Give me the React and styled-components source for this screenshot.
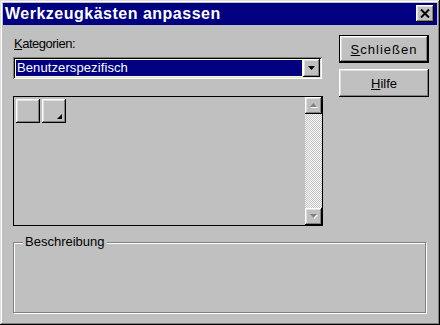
import styled, { createGlobalStyle, css } from "styled-components";

const GlobalStyle = createGlobalStyle`
  html, body {
    margin: 0;
    padding: 0;
    background: #c0c0c0;
  }
  body {
    font-family: "Liberation Sans", Arial, sans-serif;
    font-size: 13px;
    color: #000;
  }
`;

const raised = css`
  box-shadow: inset -1px -1px #000, inset 1px 1px #fff, inset -2px -2px #808080,
    inset 2px 2px #dfdfdf;
`;

const Window = styled.div`
  width: 440px;
  height: 325px;
  box-sizing: border-box;
  padding: 3px;
  display: flex;
  flex-direction: column;
  background: #c0c0c0;
  box-shadow: inset -1px -1px #000, inset 1px 1px #dfdfdf, inset -2px -2px #808080,
    inset 2px 2px #fff;
`;

const TitleBar = styled.div`
  height: 22px;
  display: flex;
  align-items: center;
  justify-content: space-between;
  padding: 0 3px 0 2px;
  background: #000080;
  color: #fff;
`;

const Title = styled.span`
  font-size: 16px;
  font-weight: bold;
  letter-spacing: 0.5px;
  line-height: 22px;
`;

const CloseButton = styled.div`
  width: 18px;
  height: 17px;
  margin-bottom: 2px;
  display: flex;
  align-items: center;
  justify-content: center;
  background: #c0c0c0;
  ${raised}
`;

const Body = styled.div`
  flex: 1;
  display: flex;
  flex-direction: column;
  padding: 10px 8px 9px 10px;
`;

const TopRow = styled.div`
  display: flex;
  gap: 16px;
`;

const LeftCol = styled.div`
  width: 310px;
  display: flex;
  flex-direction: column;
  padding-top: 1px;
`;

const RightCol = styled.div`
  width: 90px;
  display: flex;
  flex-direction: column;
  gap: 6px;
`;

const Label = styled.div`
  line-height: 16px;
  height: 16px;
  padding-left: 1px;
  letter-spacing: -0.5px;
  margin-bottom: 5px;
`;

const Combo = styled.div`
  width: 309px;
  height: 22px;
  box-sizing: border-box;
  padding: 2px;
  display: flex;
  background: #fff;
  box-shadow: inset 1px 1px #808080, inset -1px -1px #fff, inset 2px 2px #000,
    inset -2px -2px #dfdfdf;
`;

const ComboField = styled.div`
  flex: 1;
  margin: 1px;
  padding-left: 1px;
  background: #000080;
  color: #fff;
  line-height: 16px;
  letter-spacing: 0.1px;
  outline: 1px dotted #ffff80;
`;

const DropButton = styled.div`
  width: 17px;
  display: flex;
  align-items: center;
  justify-content: center;
  background: #c0c0c0;
  ${raised}
`;

const ListBox = styled.div`
  width: 310px;
  height: 130px;
  margin-top: 17px;
  box-sizing: border-box;
  border: 1px solid #000;
  display: flex;
`;

const ToolArea = styled.div`
  flex: 1;
  display: flex;
  align-items: flex-start;
  gap: 2px;
  padding: 2px;
`;

const ToolButton = styled.div`
  width: 24px;
  height: 24px;
  box-sizing: border-box;
  display: flex;
  align-items: flex-end;
  justify-content: flex-end;
  padding: 0 4px 4px 0;
  background: #c0c0c0;
  ${raised}
`;

const ScrollBar = styled.div`
  width: 17px;
  display: flex;
  flex-direction: column;
  justify-content: space-between;
  background-image: repeating-conic-gradient(#fff 0% 25%, #c0c0c0 0% 50%);
  background-size: 2px 2px;
`;

const ScrollButton = styled.div`
  width: 17px;
  height: 17px;
  display: flex;
  align-items: center;
  justify-content: center;
  background: #c0c0c0;
  ${raised}
`;

const PushButton = styled.div`
  height: 28px;
  box-sizing: border-box;
  display: flex;
  align-items: center;
  justify-content: center;
  background: #c0c0c0;
  letter-spacing: ${(p) => (p.$spacing ? p.$spacing : "0")};
  ${raised}
  ${(p) =>
    p.$default &&
    css`
      border: 1px solid #000;
    `}
`;

const GroupBox = styled.div`
  position: relative;
  height: 71px;
  margin: 16px 3px 0 0;
  box-sizing: border-box;
  border: 1px solid #808080;
  box-shadow: inset 1px 1px #fff, 1px 1px #fff;
`;

const Legend = styled.span`
  position: absolute;
  top: -9px;
  left: 9px;
  padding: 0 2px;
  line-height: 16px;
  background: #c0c0c0;
`;

function Arrow({ down, disabled }) {
  const pts = down ? "0,0 7,0 3.5,4" : "3.5,0 7,4 0,4";
  return (
    <svg width="8" height="5" viewBox="0 0 8 5">
      {disabled && <polygon points={pts} fill="#fff" transform="translate(1,1)" />}
      <polygon points={pts} fill={disabled ? "#808080" : "#000"} />
    </svg>
  );
}

export default function App() {
  return (
    <>
      <GlobalStyle />
      <Window>
        <TitleBar>
          <Title>Werkzeugkästen anpassen</Title>
          <CloseButton>
            <svg width="10" height="9" viewBox="0 0 10 9">
              <path d="M1 0.5 L9 8.5 M9 0.5 L1 8.5" stroke="#000" strokeWidth="2" />
            </svg>
          </CloseButton>
        </TitleBar>
        <Body>
          <TopRow>
            <LeftCol>
              <Label>
                <u>K</u>ategorien:
              </Label>
              <Combo>
                <ComboField>Benutzerspezifisch</ComboField>
                <DropButton>
                  <Arrow down />
                </DropButton>
              </Combo>
              <ListBox>
                <ToolArea>
                  <ToolButton />
                  <ToolButton>
                    <svg width="5" height="5" viewBox="0 0 5 5">
                      <polygon points="5,0 5,5 0,5" fill="#000" />
                    </svg>
                  </ToolButton>
                </ToolArea>
                <ScrollBar>
                  <ScrollButton>
                    <Arrow disabled />
                  </ScrollButton>
                  <ScrollButton>
                    <Arrow down disabled />
                  </ScrollButton>
                </ScrollBar>
              </ListBox>
            </LeftCol>
            <RightCol>
              <PushButton $default $spacing="1px">
                <span>
                  <u>S</u>chließen
                </span>
              </PushButton>
              <PushButton>
                <span>
                  <u>H</u>ilfe
                </span>
              </PushButton>
            </RightCol>
          </TopRow>
          <GroupBox>
            <Legend>Beschreibung</Legend>
          </GroupBox>
        </Body>
      </Window>
    </>
  );
}
